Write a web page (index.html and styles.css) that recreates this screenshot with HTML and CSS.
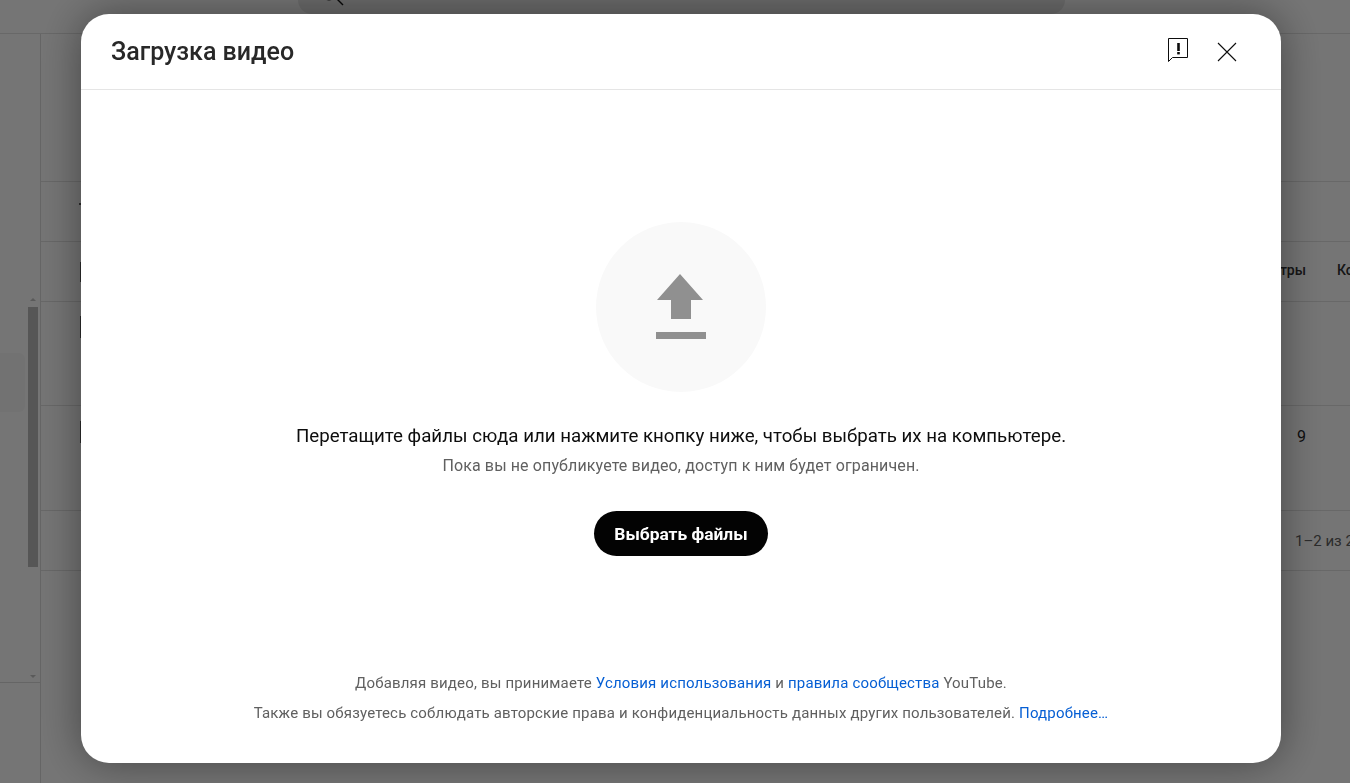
FILE: index.html
```html
<!DOCTYPE html>
<html lang="ru">
<head>
<meta charset="utf-8">
<title>Загрузка видео</title>
<link rel="stylesheet" href="styles.css">
</head>
<body>
<div class="page">
  <header class="topbar">
    <div class="search">
      <svg class="search-icon" width="24" height="14" viewBox="0 0 24 14"><circle cx="9" cy="-9" r="9" fill="none" stroke="#111" stroke-width="1"/><path d="M15.4 -2.6 L23 5" stroke="#111" stroke-width="1.4"/></svg>
    </div>
  </header>
  <div class="body">
    <aside class="sidebar">
      <div class="side-track">
        <div class="selected"></div>
        <div class="scroll"><span class="arrow-up"></span><span class="thumb"></span><span class="arrow-down"></span></div>
      </div>
      <div class="side-foot"></div>
    </aside>
    <main class="table">
      <div class="row r-head"><span class="stub stub-thin"></span></div>
      <div class="row r-cols"><span class="stub stub-cols"></span><span class="col col-views">Просмотры</span><span class="col col-comm">Комментарии</span></div>
      <div class="row r-one"><span class="stub stub-one"></span></div>
      <div class="row r-two"><span class="stub stub-two"></span><span class="num">9</span></div>
      <div class="row r-foot"><span class="pager">1–2 из 2</span></div>
    </main>
  </div>
</div>
<div class="overlay"></div>
<section class="dialog">
  <header class="dialog-head">
    <h1 class="dialog-title">Загрузка видео</h1>
    <svg class="icon-feedback" width="24" height="27" viewBox="0 0 24 27"><path d="M2.5 0.5 H21.5 V19.5 H6.5 L2.5 23.5 Z" fill="none" stroke="#0d0d0d" stroke-width="1"/><path d="M12.5 5 V13" stroke="#0d0d0d" stroke-width="2.6"/><path d="M12.5 14 V16.4" stroke="#0d0d0d" stroke-width="2.6"/></svg>
    <svg class="icon-close" width="24" height="24" viewBox="0 0 24 24"><path d="M3 3 L21 21 M21 3 L3 21" fill="none" stroke="#0d0d0d" stroke-width="1.1"/></svg>
  </header>
  <div class="dialog-body">
    <div class="upload-circle">
      <svg width="50" height="65" viewBox="0 0 50 65"><path d="M24 0 L47 26 H35 V45 H15 V26 H1 Z" fill="#909090"/><rect x="0" y="58" width="50" height="7" fill="#909090"/></svg>
    </div>
    <p class="lead">Перетащите файлы сюда или нажмите кнопку ниже, чтобы выбрать их на компьютере.</p>
    <p class="sub">Пока вы не опубликуете видео, доступ к ним будет ограничен.</p>
    <button class="select-btn" type="button">Выбрать файлы</button>
  </div>
  <footer class="dialog-foot">
    <p>Добавляя видео, вы принимаете <a href="#">Условия использования</a> и <a href="#">правила сообщества</a> YouTube.</p>
    <p>Также вы обязуетесь соблюдать авторские права и конфиденциальность данных других пользователей. <a href="#">Подробнее…</a></p>
  </footer>
</section>
</body>
</html>
```
FILE: styles.css
```css
* { box-sizing: border-box; }
html, body { margin: 0; height: 100%; overflow: hidden; }
body { font-family: Roboto, "Noto Sans", sans-serif; background: #fff; color: #0d0d0d; }

.page { height: 783px; display: flex; flex-direction: column; }
.topbar { height: 34px; flex: none; border-bottom: 1px solid #e2e2e2; background: #fff; position: relative; overflow: hidden; }
.search { margin-left: 298px; width: 767px; height: 14px; background: #e9e9e9; border-radius: 0 0 40px 40px; padding: 0 0 0 22px; overflow: hidden; }
.search-icon { display: block; }

.body { flex: 1; display: flex; min-height: 0; }
.sidebar { width: 41px; flex: none; border-right: 1px solid #dcdcdc; display: flex; flex-direction: column; }
.side-track { height: 649px; flex: none; position: relative; border-bottom: 1px solid #dcdcdc; }
.selected { position: absolute; left: 0; top: 319px; width: 25px; height: 59px; background: #f9f9f9; border-radius: 0 6px 6px 0; }
.scroll { position: absolute; left: 28px; top: 264px; width: 10px; height: 380px; display: flex; flex-direction: column; align-items: center; }
.arrow-up { width: 0; height: 0; border: 3px solid transparent; border-top: 0; border-bottom-color: #c4c4c4; margin-bottom: 6px; }
.thumb { width: 10px; height: 260px; background: #bcbcbc; flex: none; }
.arrow-down { width: 0; height: 0; border: 3px solid transparent; border-bottom: 0; border-top-color: #c4c4c4; margin-top: auto; }

.table { flex: 1; padding-top: 147px; min-width: 0; }
.row { border-bottom: 1px solid #e2e2e2; position: relative; overflow: hidden; white-space: nowrap; }
.r-head { border-top: 1px solid #e2e2e2; height: 61px; }
.r-cols { height: 60px; }
.r-one { height: 104px; }
.r-two { height: 105px; }
.r-foot { height: 60px; }
.stub { position: absolute; left: 39px; width: 3px; background: #606060; }
.stub-thin { top: 21px; height: 2px; width: 6px; left: 38px; }
.stub-cols { top: 20px; height: 20px; }
.stub-one { top: 14px; height: 22px; }
.stub-two { top: 15px; height: 22px; }
.col { position: absolute; top: 20px; font-size: 14px; font-weight: 500; color: #303030; }
.col-views { right: 44px; }
.col-comm { left: 1296px; }
.num { position: absolute; left: 1256px; top: 21px; font-size: 16px; color: #1f1f1f; }
.pager { position: absolute; left: 1254px; top: 21px; font-size: 15px; color: #606060; }

.overlay { position: fixed; inset: 0; background: rgba(0, 0, 0, .54); }

.dialog { position: fixed; left: 81px; top: 14px; width: 1200px; height: 749px; background: #fff; border-radius: 28px; box-shadow: 0 0 44px rgba(0, 0, 0, .42); display: flex; flex-direction: column; }
.dialog-head { height: 76px; flex: none; border-bottom: 1px solid #e5e5e5; display: flex; align-items: center; padding: 0 42px 0 30px; }
.dialog-title { flex: 1; margin: 0; font-size: 25px; font-weight: 500; color: #282828; line-height: 76px; }
.icon-feedback { margin-right: 25px; display: block; }
.icon-close { display: block; }

.dialog-body { flex: 1; display: flex; flex-direction: column; align-items: center; padding-top: 132px; }
.upload-circle { width: 170px; height: 170px; border-radius: 50%; background: #f9f9f9; display: flex; align-items: center; justify-content: center; padding-bottom: 2px; }
.lead { margin: 32px 0 0; font-size: 18.72px; line-height: 24px; color: #0d0d0d; }
.sub { margin: 8px 0 0; font-size: 16px; letter-spacing: .12px; line-height: 20px; color: #606060; }
.select-btn { margin-top: 35px; width: 174px; height: 45px; border: 0; border-radius: 23px; background: #030303; color: #fff; font-family: Roboto, sans-serif; font-size: 17.4px; font-weight: 700; padding: 0; }

.dialog-foot { flex: none; padding-bottom: 40px; text-align: center; }
.dialog-foot p { margin: 10px 0 0; font-size: 15px; letter-spacing: .17px; line-height: 20px; color: #606060; }
.dialog-foot a { color: #065fd4; text-decoration: none; }
```
